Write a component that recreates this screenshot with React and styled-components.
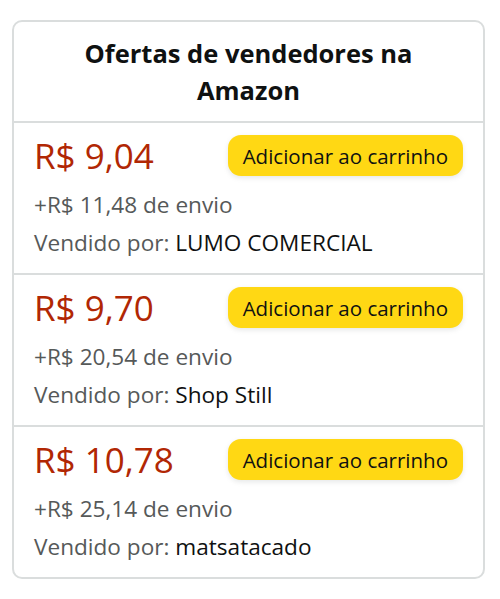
import React from 'react'
import styled, { createGlobalStyle } from 'styled-components'

const GlobalStyle = createGlobalStyle`
  body {
    margin: 0;
    background: #fff;
    font-family: 'Open Sans', 'Noto Sans', sans-serif;
  }
`

const Page = styled.div`
  padding: 20px 15px 0 12px;
`

const Card = styled.section`
  width: 473px;
  box-sizing: border-box;
  border: 2px solid #dadddd;
  border-radius: 10px;
  overflow: hidden;
`

const Header = styled.h2`
  margin: 0;
  padding: 13px 50px 12px;
  text-align: center;
  font-size: 25.5px;
  line-height: 37px;
  font-weight: 700;
  color: #0f1111;
  border-bottom: 2px solid #dadddd;
`

const Offer = styled.div`
  padding: 12px 20px 11px;
  display: flex;
  flex-direction: column;
  & + & {
    border-top: 2px solid #dadddd;
  }
`

const TopLine = styled.div`
  display: flex;
  justify-content: space-between;
  align-items: center;
  margin-bottom: 10px;
`

const Price = styled.span`
  font-size: 35px;
  line-height: 40px;
  color: #b12704;
`

const AddButton = styled.button`
  font-family: inherit;
  font-size: 20.5px;
  color: #0f1111;
  background: #ffd814;
  border: none;
  border-radius: 13px;
  height: 41px;
  padding: 0 15px;
  box-shadow: 0 2px 5px rgba(213, 217, 217, 0.6);
  cursor: pointer;
`

const Line = styled.div`
  font-size: 22.6px;
  line-height: 38px;
  color: #565959;
`

const Seller = styled.span`
  color: #0f1111;
`

const offers = [
  { price: 'R$ 9,04', ship: '+R$ 11,48 de envio', seller: 'LUMO COMERCIAL' },
  { price: 'R$ 9,70', ship: '+R$ 20,54 de envio', seller: 'Shop Still' },
  { price: 'R$ 10,78', ship: '+R$ 25,14 de envio', seller: 'matsatacado' }
]

export default function App () {
  return (
    <>
      <GlobalStyle />
      <Page>
        <Card>
          <Header>Ofertas de vendedores na Amazon</Header>
          {offers.map(o => (
            <Offer key={o.price}>
              <TopLine>
                <Price>{o.price}</Price>
                <AddButton>Adicionar ao carrinho</AddButton>
              </TopLine>
              <Line>{o.ship}</Line>
              <Line>Vendido por: <Seller>{o.seller}</Seller></Line>
            </Offer>
          ))}
        </Card>
      </Page>
    </>
  )
}
